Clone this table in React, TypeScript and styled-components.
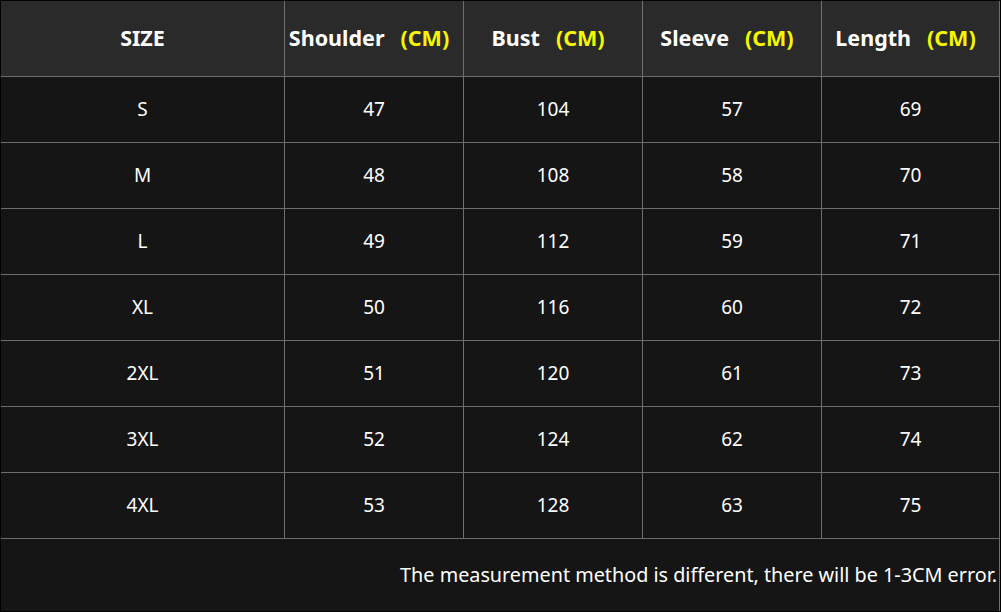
import React from "react";
import styled, { createGlobalStyle } from "styled-components";

const Global = createGlobalStyle`
  html, body { margin: 0; padding: 0; background: #000; }
  body { font-family: "Noto Sans", "Open Sans", sans-serif; }
`;

const Frame = styled.div`
  width: 1001px;
  height: 612px;
  box-sizing: border-box;
  background: #000;
  padding: 1px 1px 1px 1px;
`;

const Grid = styled.div`
  display: grid;
  grid-template-columns: 283px 178px 178px 178px 177px;
  grid-template-rows: 75px repeat(7, 65px) 72px;
  gap: 1px;
  background: #6e6e6e;
  padding-right: 1px;
  width: 999px;
  box-sizing: border-box;
`;

const HeadCell = styled.div`
  background: #2a2a2a;
  color: #fff;
  font-weight: 700;
  font-size: 21.5px;
  display: flex;
  align-items: center;
  justify-content: center;
  white-space: nowrap;
  padding-bottom: 3px;
  box-sizing: border-box;
`;

const Unit = styled.span`
  color: #f6f600;
  margin-left: 16px;
  margin-right: 10px;
`;

const Cell = styled.div`
  background: #151515;
  color: #fff;
  font-size: 19px;
  display: flex;
  align-items: center;
  justify-content: center;
  padding-bottom: 2px;
  box-sizing: border-box;
`;

const Note = styled.div`
  grid-column: 1 / -1;
  background: #151515;
  color: #fff;
  font-size: 19.8px;
  display: flex;
  align-items: center;
  justify-content: flex-end;
  padding: 0 2px 1px 0;
`;

const headers = ["Shoulder", "Bust", "Sleeve", "Length"];
const rows: [string, number, number, number, number][] = [
  ["S", 47, 104, 57, 69],
  ["M", 48, 108, 58, 70],
  ["L", 49, 112, 59, 71],
  ["XL", 50, 116, 60, 72],
  ["2XL", 51, 120, 61, 73],
  ["3XL", 52, 124, 62, 74],
  ["4XL", 53, 128, 63, 75],
];

export default function App() {
  return (
    <Frame>
      <Global />
      <Grid>
        <HeadCell>SIZE</HeadCell>
        {headers.map((h) => (
          <HeadCell key={h}>
            {h}
            <Unit>(CM)</Unit>
          </HeadCell>
        ))}
        {rows.map((r) =>
          r.map((v, i) => <Cell key={r[0] + i}>{v}</Cell>)
        )}
        <Note>The measurement method is different, there will be 1-3CM error.</Note>
      </Grid>
    </Frame>
  );
}
